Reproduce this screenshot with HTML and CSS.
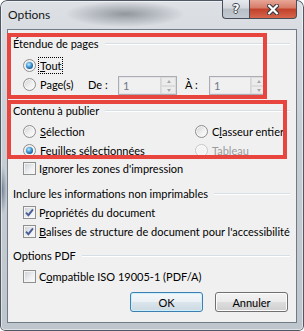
FILE: index.html
```html
<!DOCTYPE html>
<html lang="fr">
<head>
<meta charset="utf-8">
<title>Options</title>
<link rel="stylesheet" href="styles.css">
</head>
<body>
<div class="window">
  <div class="titlebar">
    <span class="title">Options</span>
    <div class="caption">
      <div class="cbtn help"><span class="q">?</span></div>
      <div class="cbtn close">
        <svg width="12" height="11" viewBox="0 0 12 11"><path d="M2.2 1.8 L9.8 9.2 M9.8 1.8 L2.2 9.2" stroke="#3b3b40" stroke-width="4.4" stroke-linecap="square" fill="none"/><path d="M2.2 1.8 L9.8 9.2 M9.8 1.8 L2.2 9.2" stroke="#fff" stroke-width="2.3" stroke-linecap="square" fill="none"/></svg>
      </div>
    </div>
  </div>
  <div class="client">
    <div class="ghead"><span>Étendue de pages</span><i class="rule"></i></div>
    <div class="row m4"><span class="radio on"></span><span class="lbl focus"><u>T</u>out</span></div>
    <div class="row m1">
      <span class="radio"></span><span class="lbl w-pages">Pa<u>g</u>e(s)</span>
      <span class="lbl w-de">De :</span>
      <span class="spin w59"><span class="val">1</span><span class="arrows"><span class="up"></span><span class="dn"></span></span></span>
      <span class="lbl w-a">À :</span>
      <span class="spin w58"><span class="val">1</span><span class="arrows"><span class="up"></span><span class="dn"></span></span></span>
    </div>

    <div class="ghead m9"><span>Contenu à publier</span><i class="rule"></i></div>
    <div class="row m3"><span class="col1"><span class="radio"></span><span class="lbl"><u>S</u>élection</span></span><span class="radio"></span><span class="lbl">C<u>l</u>asseur entier</span></div>
    <div class="row m1"><span class="col1"><span class="radio on"></span><span class="lbl"><u>F</u>euilles sélectionnées</span></span><span class="radio off"></span><span class="lbl dis">Tableau</span></div>
    <div class="row m0"><span class="check"></span><span class="lbl">I<u>g</u>norer les zones d'impression</span></div>

    <div class="ghead m7"><span>Inclure les informations non imprimables</span><i class="rule"></i></div>
    <div class="row m1"><span class="check on"><svg width="9" height="9" viewBox="0 0 9 9"><path d="M1 4.6 L3.4 7.2 L8 1.4" stroke="#4a5f97" stroke-width="1.9" fill="none"/></svg></span><span class="lbl">P<u>r</u>opriétés du document</span></div>
    <div class="row m1"><span class="check on"><svg width="9" height="9" viewBox="0 0 9 9"><path d="M1 4.6 L3.4 7.2 L8 1.4" stroke="#4a5f97" stroke-width="1.9" fill="none"/></svg></span><span class="lbl"><u>B</u>alises de structure de document pour l'accessibilité</span></div>

    <div class="ghead m6"><span>Options PDF</span><i class="rule"></i></div>
    <div class="row m3"><span class="check"></span><span class="lbl">C<u>o</u>mpatible ISO 19005-1 (PDF/A)</span></div>

    <div class="buttons">
      <button class="btn default">OK</button>
      <button class="btn">Annuler</button>
    </div>
  </div>
</div>
<div class="annot a1"></div>
<div class="annot a2"></div>
</body>
</html>
```

FILE: styles.css
```css
* { box-sizing: border-box; }
html, body { margin: 0; padding: 0; }
body {
  width: 304px; height: 331px; overflow: hidden; position: relative;
  font-family: Lato, "Liberation Sans", sans-serif; font-size: 11px; color: #000;
  background: #fff;
}
u { text-decoration: underline; text-underline-offset: 1px; }

.window {
  width: 304px; height: 331px;
  padding: 0 7px 8px;
  display: flex; flex-direction: column;
  border-radius: 7px 7px 5px 5px;
  background:
    radial-gradient(ellipse 60px 13px at 125px 14px, rgba(85,90,100,.55), rgba(85,90,100,0)),
    radial-gradient(ellipse 5px 25px at 2px 190px, rgba(60,80,110,.6), rgba(60,80,110,0)),
    linear-gradient(#dde1e6, #c9ced4 40%, #bfc5cc);
  box-shadow: inset 0 0 0 1px #4f5763, inset 0 0 0 2px rgba(255,255,255,.5);
}
.titlebar { height: 29px; display: flex; align-items: flex-start; }
.title { margin: 8px 0 0 1px; font-size: 12px; line-height: 14px; color: #161616; }
.caption { margin-left: auto; display: flex; height: 19px; }
.cbtn {
  height: 19px; display: flex; align-items: center; justify-content: center;
  border: 1px solid #474e59; border-top: none;
}
.help {
  width: 27px; border-radius: 0 0 0 4px; border-right: none;
  background: linear-gradient(#e6e9ed, #d3d7dc 45%, #b8bec6 50%, #c4cad1);
}
.q {
  font-family: "DejaVu Sans", sans-serif; font-weight: bold; font-size: 12px; color: #fff; line-height: 12px;
  text-shadow: 1px 0 0 #3d434c, -1px 0 0 #3d434c, 0 1px 0 #3d434c, 0 -1px 0 #3d434c;
}
.close {
  width: 48px; border-radius: 0 0 4px 0;
  background: linear-gradient(#e8a697, #d57a66 45%, #c2402a 50%, #d6664c);
}

.client {
  flex: 1; background: #f0f0f0; border: 1px solid #707b88;
  padding: 4px 6px 0 5px; overflow: hidden;
}
.ghead { height: 18px; display: flex; align-items: center; gap: 6px; white-space: nowrap; }
.rule { flex: 1; height: 1px; background: #d5dfe5; box-shadow: 0 1px 0 #fff; margin-top: 1px; }
.row { height: 18px; display: flex; align-items: center; padding-left: 10px; white-space: nowrap; }
.m0 { margin-top: 0; } .m1 { margin-top: 1px; } .m3 { margin-top: 3px; } .m4 { margin-top: 4px; }
.m6 { margin-top: 6px; } .m7 { margin-top: 7px; } .m9 { margin-top: 8px; }

.col1 { width: 172px; display: flex; align-items: center; }
.lbl { display: inline-block; }
.dis { color: #9b9b9b; }
.focus { border: 1px dotted #000; padding: 0 1px; margin-left: -2px; height: 17px; line-height: 15px; }

.radio {
  width: 13px; height: 13px; border-radius: 50%; margin-right: 4px; flex: none;
  border: 1px solid #8d8e8f; position: relative;
  background: linear-gradient(135deg, #cfd0d1, #f0f0f0 55%, #fdfdfd);
  box-shadow: inset 0 0 0 1px #f6f6f6;
}
.radio.on::after {
  content: ""; position: absolute; left: 2px; top: 2px; width: 7px; height: 7px; border-radius: 50%;
  background: radial-gradient(circle at 40% 35%, #c8ecff 0, #5fb1e6 30%, #1f6aa8 65%, #14436c 100%);
}
.radio.off { border-color: #c7c8c9; background: #f4f4f4; box-shadow: inset 0 0 0 1px #fbfbfb; }

.check {
  width: 13px; height: 13px; margin-right: 3px; flex: none;
  border: 1px solid #8e8f8f; display: flex; align-items: center; justify-content: center;
  background: linear-gradient(135deg, #cbcfd5, #eef0f2 60%, #fafafa);
  box-shadow: inset 0 0 0 1px #f4f4f4;
}

.w-pages { width: 48px; }
.w-de { width: 30px; }
.w-a { width: 24px; margin-left: 8px; }
.spin {
  height: 19px; margin-top: 3px; display: flex; flex: none;
  border: 1px solid #abadb3; background: #f0f0f0; box-shadow: inset 0 0 0 1px #e3e5ea;
}
.w59 { width: 59px; } .w58 { width: 58px; }
.spin .val { flex: 1; padding-left: 4px; line-height: 17px; color: #6e7787; }
.arrows { width: 16px; display: flex; flex-direction: column; border-left: 1px solid #d6d6d6; }
.arrows span { flex: 1; position: relative; border: 1px solid #dcdcdc; background: #ececec; }
.arrows .up::after, .arrows .dn::after {
  content: ""; position: absolute; left: 5px; top: 2px;
  border-left: 2.5px solid transparent; border-right: 2.5px solid transparent;
}
.arrows .up::after { border-bottom: 3px solid #a7a7a7; }
.arrows .dn::after { border-top: 3px solid #a7a7a7; }

.buttons { display: flex; justify-content: flex-end; gap: 12px; margin-top: 7px; padding-right: 2px; }
.btn {
  width: 73px; height: 20px; padding: 0; font: inherit; color: #000;
  border: 1px solid #707070; border-radius: 3px;
  background: linear-gradient(#f2f2f2, #ebebeb 50%, #dddddd 51%, #cfcfcf);
  box-shadow: inset 0 0 0 1px #fcfcfc;
}
.btn.default { border-color: #3c7fb1; box-shadow: inset 0 0 0 1px #cdeefc; background: linear-gradient(#f3f7fa, #eaf0f4 50%, #dbe5ec 51%, #ccd9e2); }

.annot { position: absolute; border: 4px solid #e8453f; }
.a1 { left: 7px; top: 33px; width: 260px; height: 66px; }
.a2 { left: 7px; top: 100px; width: 280px; height: 59px; }
```
